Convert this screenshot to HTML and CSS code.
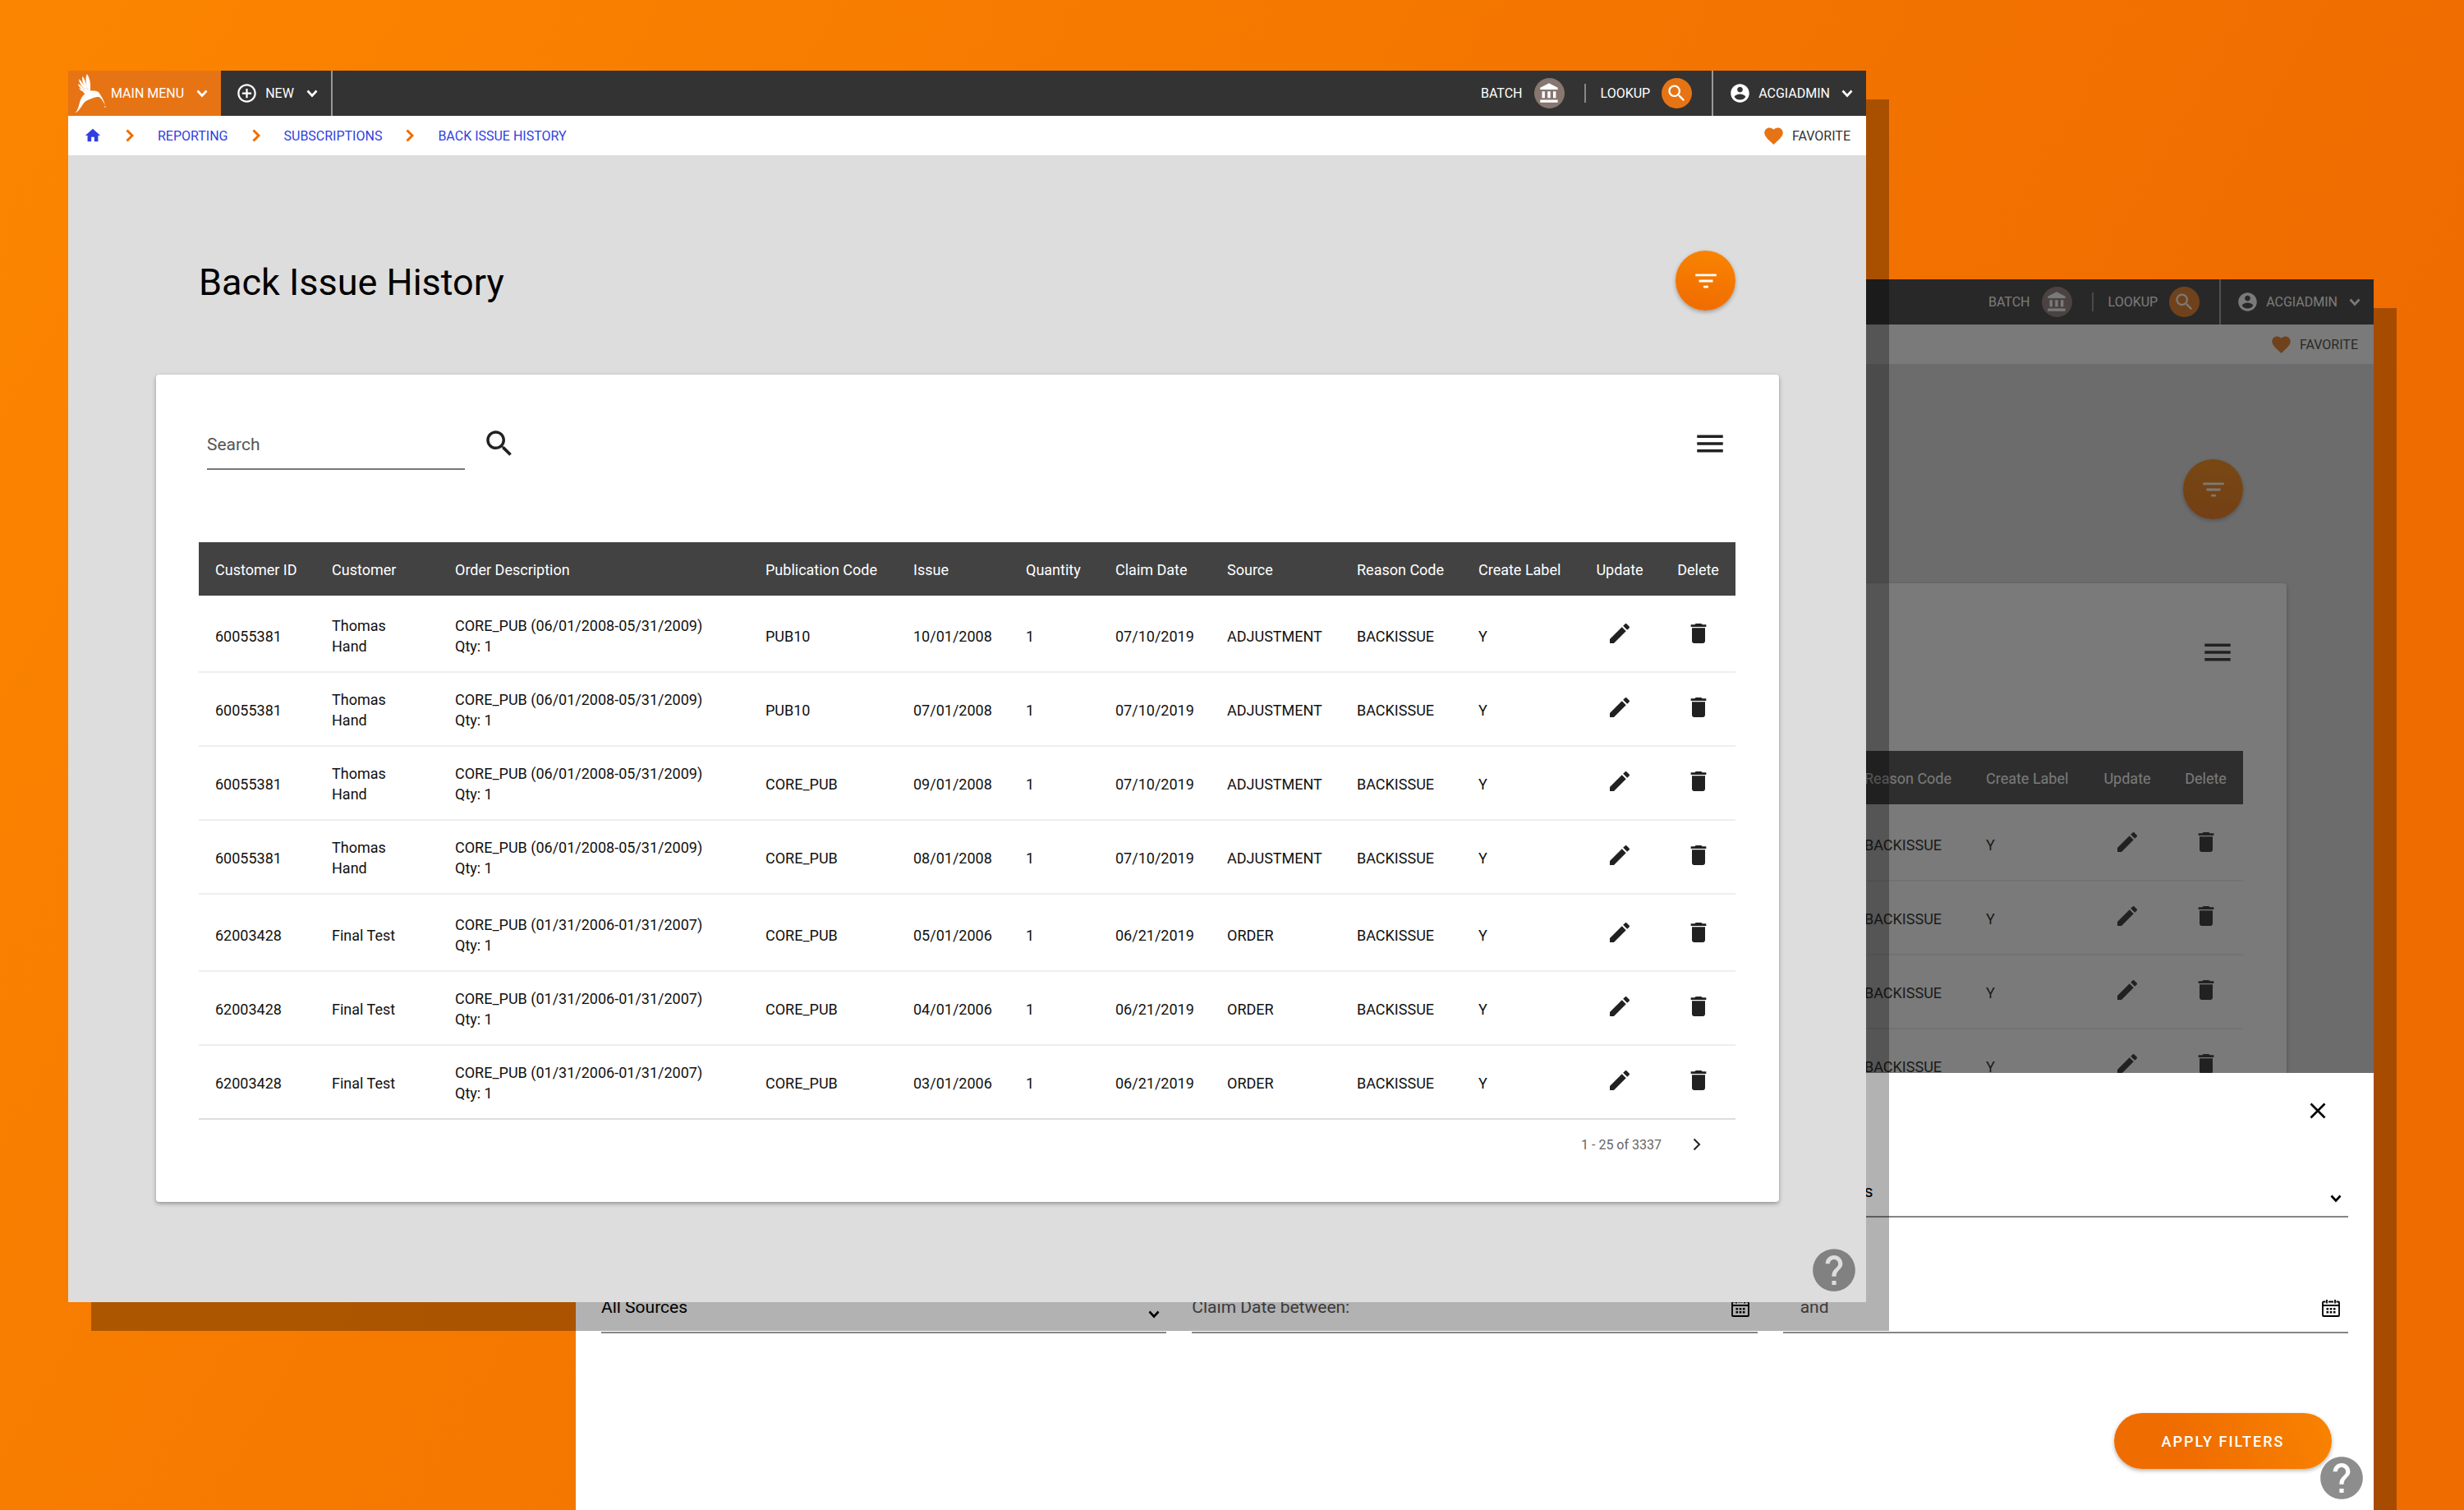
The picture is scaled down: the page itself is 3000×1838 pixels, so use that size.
FILE: index.html
```html
<!DOCTYPE html>
<html lang="en">
<head>
<meta charset="utf-8">
<title>Back Issue History</title>
<link rel="stylesheet" href="styles.css">
</head>
<body>
<svg class="sprite" aria-hidden="true">
  <symbol id="i-bird" viewBox="25 15 115 145">
    <path d="M79 76 C82 54 78 30 67 15 C60 30 63 52 70 70 Z M69 70 C64 50 60 36 51 23 C46 36 54 56 65 71 Z M65 72 C55 56 49 44 38 34 C36 46 48 62 61 72 Z M61 74 C51 64 45 56 34 51 C35 62 47 71 58 75 Z M58 77 C51 73 45 68 38 66 C41 76 50 80 58 80 Z"/>
    <path d="M54 76 C60 68 74 68 78 76 C88 77 98 76 106 80 C112 83 114 88 117 93 C124 104 131 116 134 131 C129 118 122 107 113 100 C104 99 96 101 88 104 C74 109 62 113 55 122 C47 133 40 149 25 158 C35 144 38 128 42 114 C46 102 52 94 60 88 C54 84 50 80 54 76 Z"/>
    <circle cx="134" cy="136" r="2.500"/>
  </symbol>
  <symbol id="i-down" viewBox="0 0 14 10"><path d="M1.500 1.500 L7 7.500 L12.500 1.500" fill="none" stroke="currentColor" stroke-width="2.600"/></symbol>
  <symbol id="i-right" viewBox="0 0 10 16"><path d="M1.500 1.500 L8 8 L1.500 14.500" fill="none" stroke="currentColor" stroke-width="3"/></symbol>
  <symbol id="i-next" viewBox="0 0 10 16"><path d="M1.500 1.500 L8 8 L1.500 14.500" fill="none" stroke="currentColor" stroke-width="2"/></symbol>
  <symbol id="i-plus" viewBox="0 0 24 24"><path d="M13 7h-2v4H7v2h4v4h2v-4h4v-2h-4V7zm-1-5C6.480 2 2 6.480 2 12s4.480 10 10 10 10-4.480 10-10S17.520 2 12 2zm0 18c-4.410 0-8-3.590-8-8s3.590-8 8-8 8 3.590 8 8-3.590 8-8 8z"/></symbol>
  <symbol id="i-bank" viewBox="0 0 24 24"><path d="M4 10v7h3v-7H4zm6 0v7h3v-7h-3zM2 22h19v-3H2v3zm14-12v7h3v-7h-3zm-4.500-9L2 6v2h19V6l-9.500-5z"/></symbol>
  <symbol id="i-search" viewBox="0 0 24 24"><path d="M15.500 14h-.79l-.28-.27C15.410 12.590 16 11.110 16 9.500 16 5.910 13.090 3 9.500 3S3 5.910 3 9.500 5.910 16 9.500 16c1.610 0 3.090-.59 4.230-1.570l.27.28v.79l5 4.990L20.490 19l-4.990-5zm-6 0C7.010 14 5 11.990 5 9.500S7.010 5 9.500 5 14 7.010 14 9.500 11.990 14 9.500 14z"/></symbol>
  <symbol id="i-user" viewBox="0 0 24 24"><path d="M12 2C6.480 2 2 6.480 2 12s4.480 10 10 10 10-4.480 10-10S17.520 2 12 2zm0 3c1.660 0 3 1.340 3 3s-1.340 3-3 3-3-1.340-3-3 1.340-3 3-3zm0 14.200c-2.500 0-4.710-1.280-6-3.220.03-1.990 4-3.080 6-3.080 1.990 0 5.970 1.090 6 3.080-1.290 1.940-3.500 3.220-6 3.220z"/></symbol>
  <symbol id="i-home" viewBox="0 0 24 24"><path d="M10 20v-6h4v6h5v-8h3L12 3 2 12h3v8z"/></symbol>
  <symbol id="i-heart" viewBox="0 0 24 24"><path d="M12 21.350l-1.450-1.320C5.400 15.360 2 12.280 2 8.500 2 5.420 4.420 3 7.500 3c1.740 0 3.410.81 4.500 2.090C13.090 3.810 14.760 3 16.500 3 19.580 3 22 5.420 22 8.500c0 3.780-3.400 6.860-8.550 11.540L12 21.350z"/></symbol>
  <symbol id="i-filter" viewBox="0 0 24 24"><path d="M10 18h4v-2h-4v2zM3 6v2h18V6H3zm3 7h12v-2H6v2z"/></symbol>
  <symbol id="i-menu" viewBox="0 0 24 24"><path d="M3 18h18v-2H3v2zm0-5h18v-2H3v2zm0-7v2h18V6H3z"/></symbol>
  <symbol id="i-edit" viewBox="0 0 24 24"><path d="M3 17.250V21h3.750L17.810 9.940l-3.750-3.750L3 17.250zM20.710 7.040c.39-.39.39-1.020 0-1.410l-2.340-2.340c-.39-.39-1.020-.39-1.410 0l-1.830 1.830 3.750 3.750 1.830-1.830z"/></symbol>
  <symbol id="i-trash" viewBox="0 0 24 24"><path d="M6 19c0 1.100.9 2 2 2h8c1.100 0 2-.9 2-2V7H6v12zM19 4h-3.500l-1-1h-5l-1 1H5v2h14V4z"/></symbol>
  <symbol id="i-help" viewBox="0 0 24 24"><path d="M12 2C6.480 2 2 6.480 2 12s4.480 10 10 10 10-4.480 10-10S17.520 2 12 2zm1 17h-2v-2h2v2zm2.070-7.750l-.9.920C13.450 12.900 13 13.500 13 15h-2v-.5c0-1.100.45-2.100 1.170-2.830l1.240-1.260c.37-.36.59-.86.59-1.410 0-1.100-.9-2-2-2s-2 .9-2 2H8c0-2.210 1.790-4 4-4s4 1.790 4 4c0 .88-.36 1.680-.93 2.250z"/></symbol>
  <symbol id="i-close" viewBox="0 0 20 20"><path d="M1.500 1.500 L18.500 18.500 M18.500 1.500 L1.500 18.500" fill="none" stroke="currentColor" stroke-width="2.600"/></symbol>
  <symbol id="i-calendar" viewBox="0 0 22 21"><path d="M4.500 2.500H2a1 1 0 0 0-1 1V19a1 1 0 0 0 1 1h18a1 1 0 0 0 1-1V3.500a1 1 0 0 0-1-1h-2.500M8 2.500h6M1 7h20M6 0v4.500M16 0v4.500" fill="none" stroke="currentColor" stroke-width="1.800"/><path d="M5.500 10h2.600v2.600H5.500zM9.700 10h2.600v2.600H9.700zM13.900 10h2.600v2.600h-2.600zM5.500 14h2.600v2.600H5.500zM9.700 14h2.600v2.600H9.700zM13.900 14h2.600v2.600h-2.600z"/></symbol>
</svg>

<div class="desktop">

  <section class="window window-back">
    <header class="topbar">
      <div class="topbar-right">
        <button class="tool">BATCH <span class="disc disc-grey"><svg class="s27"><use href="#i-bank"/></svg></span></button>
        <span class="bar"></span>
        <button class="tool tool-lookup">LOOKUP <span class="disc"><svg class="s27"><use href="#i-search"/></svg></span></button>
        <button class="account"><svg class="s27"><use href="#i-user"/></svg><span class="account-name">ACGIADMIN</span><svg class="down"><use href="#i-down"/></svg></button>
      </div>
    </header>
    <div class="crumbs">
      <button class="favorite"><svg class="s27"><use href="#i-heart"/></svg>FAVORITE</button>
    </div>
    <div class="page">
      <div class="page-head">
        <button class="fab" aria-label="Filter"><svg class="s34"><use href="#i-filter"/></svg></button>
      </div>
      <div class="card">
        <div class="toolbar">
          <button class="icon-btn toolbar-menu" aria-label="Menu"><svg class="s42"><use href="#i-menu"/></svg></button>
        </div>
        <table class="grid grid-tail">
          <colgroup><col class="c-reason"><col class="c-label"><col class="c-update"><col class="c-delete"></colgroup>
          <thead><tr><th>Reason Code</th><th>Create Label</th><th class="act">Update</th><th class="act">Delete</th></tr></thead>
          <tbody>
            <tr class="group"><td>BACKISSUE</td><td>Y</td><td class="act"><button class="icon-btn" aria-label="Update"><svg class="s32"><use href="#i-edit"/></svg></button></td><td class="act"><button class="icon-btn" aria-label="Delete"><svg class="s32"><use href="#i-trash"/></svg></button></td></tr>
            <tr><td>BACKISSUE</td><td>Y</td><td class="act"><button class="icon-btn" aria-label="Update"><svg class="s32"><use href="#i-edit"/></svg></button></td><td class="act"><button class="icon-btn" aria-label="Delete"><svg class="s32"><use href="#i-trash"/></svg></button></td></tr>
            <tr><td>BACKISSUE</td><td>Y</td><td class="act"><button class="icon-btn" aria-label="Update"><svg class="s32"><use href="#i-edit"/></svg></button></td><td class="act"><button class="icon-btn" aria-label="Delete"><svg class="s32"><use href="#i-trash"/></svg></button></td></tr>
            <tr><td>BACKISSUE</td><td>Y</td><td class="act"><button class="icon-btn" aria-label="Update"><svg class="s32"><use href="#i-edit"/></svg></button></td><td class="act"><button class="icon-btn" aria-label="Delete"><svg class="s32"><use href="#i-trash"/></svg></button></td></tr>
          </tbody>
        </table>
      </div>
    </div>
    <form class="sheet">
      <button type="button" class="icon-btn close" aria-label="Close"><svg class="s20"><use href="#i-close"/></svg></button>
      <div class="fields">
        <div class="field field-reason"><select aria-label="Reason"><option>All Reasons</option></select><svg class="down field-icon"><use href="#i-down"/></svg></div>
        <div class="field"><select aria-label="Source"><option>All Sources</option></select><svg class="down field-icon"><use href="#i-down"/></svg></div>
        <div class="field"><input type="text" aria-label="Claim date from" placeholder="Claim Date between:"><svg class="cal"><use href="#i-calendar"/></svg></div>
        <div class="field field-and"><input type="text" aria-label="Claim date to" placeholder="and"><svg class="cal"><use href="#i-calendar"/></svg></div>
      </div>
      <button type="button" class="apply">APPLY FILTERS</button>
    </form>
    <button class="help" aria-label="Help"><svg class="s62"><use href="#i-help"/></svg></button>
  </section>

  <section class="window window-front">
    <header class="topbar">
      <button class="main-menu"><svg class="bird"><use href="#i-bird"/></svg><span class="main-menu-text">MAIN MENU</span><svg class="down"><use href="#i-down"/></svg></button>
      <button class="new-menu"><svg class="s27"><use href="#i-plus"/></svg><span class="new-menu-text">NEW</span><svg class="down"><use href="#i-down"/></svg></button>
      <div class="topbar-right">
        <button class="tool">BATCH <span class="disc disc-grey"><svg class="s27"><use href="#i-bank"/></svg></span></button>
        <span class="bar"></span>
        <button class="tool tool-lookup">LOOKUP <span class="disc"><svg class="s27"><use href="#i-search"/></svg></span></button>
        <button class="account"><svg class="s27"><use href="#i-user"/></svg><span class="account-name">ACGIADMIN</span><svg class="down"><use href="#i-down"/></svg></button>
      </div>
    </header>
    <nav class="crumbs" aria-label="Breadcrumb">
      <a class="home" href="#" aria-label="Home"><svg class="s22"><use href="#i-home"/></svg></a>
      <svg class="sep"><use href="#i-right"/></svg>
      <a href="#">REPORTING</a>
      <svg class="sep"><use href="#i-right"/></svg>
      <a href="#">SUBSCRIPTIONS</a>
      <svg class="sep"><use href="#i-right"/></svg>
      <a href="#">BACK ISSUE HISTORY</a>
      <button class="favorite"><svg class="s27"><use href="#i-heart"/></svg>FAVORITE</button>
    </nav>
    <main class="page">
      <div class="page-head">
        <h1>Back Issue History</h1>
        <button class="fab" aria-label="Filter"><svg class="s34"><use href="#i-filter"/></svg></button>
      </div>
      <div class="card">
        <div class="toolbar">
          <input class="search" type="text" placeholder="Search" aria-label="Search">
          <button class="icon-btn" aria-label="Run search"><svg class="s42"><use href="#i-search"/></svg></button>
          <button class="icon-btn toolbar-menu" aria-label="Menu"><svg class="s42"><use href="#i-menu"/></svg></button>
        </div>
        <table class="grid">
          <colgroup><col class="c-id"><col class="c-customer"><col class="c-order"><col class="c-pub"><col class="c-issue"><col class="c-qty"><col class="c-claim"><col class="c-source"><col class="c-reason"><col class="c-label"><col class="c-update"><col class="c-delete"></colgroup>
          <thead><tr><th>Customer ID</th><th>Customer</th><th>Order Description</th><th>Publication Code</th><th>Issue</th><th>Quantity</th><th>Claim Date</th><th>Source</th><th>Reason Code</th><th>Create Label</th><th class="act">Update</th><th class="act">Delete</th></tr></thead>
          <tbody>
            <tr class="group"><td>60055381</td><td>Thomas<br>Hand</td><td>CORE_PUB (06/01/2008-05/31/2009)<br>Qty: 1</td><td>PUB10</td><td>10/01/2008</td><td>1</td><td>07/10/2019</td><td>ADJUSTMENT</td><td>BACKISSUE</td><td>Y</td><td class="act"><button class="icon-btn" aria-label="Update"><svg class="s32"><use href="#i-edit"/></svg></button></td><td class="act"><button class="icon-btn" aria-label="Delete"><svg class="s32"><use href="#i-trash"/></svg></button></td></tr>
            <tr><td>60055381</td><td>Thomas<br>Hand</td><td>CORE_PUB (06/01/2008-05/31/2009)<br>Qty: 1</td><td>PUB10</td><td>07/01/2008</td><td>1</td><td>07/10/2019</td><td>ADJUSTMENT</td><td>BACKISSUE</td><td>Y</td><td class="act"><button class="icon-btn" aria-label="Update"><svg class="s32"><use href="#i-edit"/></svg></button></td><td class="act"><button class="icon-btn" aria-label="Delete"><svg class="s32"><use href="#i-trash"/></svg></button></td></tr>
            <tr><td>60055381</td><td>Thomas<br>Hand</td><td>CORE_PUB (06/01/2008-05/31/2009)<br>Qty: 1</td><td>CORE_PUB</td><td>09/01/2008</td><td>1</td><td>07/10/2019</td><td>ADJUSTMENT</td><td>BACKISSUE</td><td>Y</td><td class="act"><button class="icon-btn" aria-label="Update"><svg class="s32"><use href="#i-edit"/></svg></button></td><td class="act"><button class="icon-btn" aria-label="Delete"><svg class="s32"><use href="#i-trash"/></svg></button></td></tr>
            <tr><td>60055381</td><td>Thomas<br>Hand</td><td>CORE_PUB (06/01/2008-05/31/2009)<br>Qty: 1</td><td>CORE_PUB</td><td>08/01/2008</td><td>1</td><td>07/10/2019</td><td>ADJUSTMENT</td><td>BACKISSUE</td><td>Y</td><td class="act"><button class="icon-btn" aria-label="Update"><svg class="s32"><use href="#i-edit"/></svg></button></td><td class="act"><button class="icon-btn" aria-label="Delete"><svg class="s32"><use href="#i-trash"/></svg></button></td></tr>
            <tr class="group"><td>62003428</td><td>Final Test</td><td>CORE_PUB (01/31/2006-01/31/2007)<br>Qty: 1</td><td>CORE_PUB</td><td>05/01/2006</td><td>1</td><td>06/21/2019</td><td>ORDER</td><td>BACKISSUE</td><td>Y</td><td class="act"><button class="icon-btn" aria-label="Update"><svg class="s32"><use href="#i-edit"/></svg></button></td><td class="act"><button class="icon-btn" aria-label="Delete"><svg class="s32"><use href="#i-trash"/></svg></button></td></tr>
            <tr><td>62003428</td><td>Final Test</td><td>CORE_PUB (01/31/2006-01/31/2007)<br>Qty: 1</td><td>CORE_PUB</td><td>04/01/2006</td><td>1</td><td>06/21/2019</td><td>ORDER</td><td>BACKISSUE</td><td>Y</td><td class="act"><button class="icon-btn" aria-label="Update"><svg class="s32"><use href="#i-edit"/></svg></button></td><td class="act"><button class="icon-btn" aria-label="Delete"><svg class="s32"><use href="#i-trash"/></svg></button></td></tr>
            <tr><td>62003428</td><td>Final Test</td><td>CORE_PUB (01/31/2006-01/31/2007)<br>Qty: 1</td><td>CORE_PUB</td><td>03/01/2006</td><td>1</td><td>06/21/2019</td><td>ORDER</td><td>BACKISSUE</td><td>Y</td><td class="act"><button class="icon-btn" aria-label="Update"><svg class="s32"><use href="#i-edit"/></svg></button></td><td class="act"><button class="icon-btn" aria-label="Delete"><svg class="s32"><use href="#i-trash"/></svg></button></td></tr>
          </tbody>
        </table>
        <div class="pager"><span>1 - 25 of 3337</span><button class="icon-btn" aria-label="Next page"><svg class="next"><use href="#i-next"/></svg></button></div>
      </div>
    </main>
    <button class="help" aria-label="Help"><svg class="s62"><use href="#i-help"/></svg></button>
  </section>

</div>
</body>
</html>
```
FILE: styles.css
```css
* { box-sizing: border-box; }

body {
  margin: 0;
  font-family: Roboto, "Liberation Sans", sans-serif;
  font-size: 18px;
  line-height: 25px;
  color: #111;
}

button {
  margin: 0;
  padding: 0;
  border: 0;
  background: none;
  color: inherit;
  font: inherit;
  cursor: pointer;
}

input, select {
  margin: 0;
  border: 0;
  background: none;
  font: inherit;
  outline: 0;
}

svg { display: block; flex: none; fill: currentColor; }
.sprite { position: absolute; width: 0; height: 0; }
.s20 { width: 20px; height: 20px; }
.s22 { width: 22px; height: 22px; }
.s27 { width: 27px; height: 27px; }
.s32 { width: 32px; height: 32px; }
.s34 { width: 34px; height: 34px; }
.s42 { width: 42px; height: 42px; }
.s62 { width: 62px; height: 62px; }
.down { width: 14px; height: 10px; }
.next { width: 10px; height: 16px; }

/* Desktop: both windows share one grid cell and overlap */
.desktop {
  display: grid;
  min-height: 100vh;
  background: linear-gradient(120deg, #fb8500, #ef6c00 78%);
}

.window {
  grid-area: 1 / 1;
  position: relative;
  isolation: isolate;
  background: #ddd;
  box-shadow: 28px 35px 0 rgba(0, 0, 0, .3);
}
.window-front { margin: 86px 728px 253px 83px; }
.window-back { margin: 340px 110px 0 701px; }
.window-back::before {
  content: "";
  position: absolute;
  inset: 0;
  z-index: 1;
  background: rgba(33, 33, 33, .6);
}

/* Top bar */
.topbar {
  display: flex;
  height: 55px;
  background: #333;
  color: #fff;
  font-size: 16px;
}
.topbar button { display: flex; align-items: center; }
.main-menu { padding: 0 16px 0 9px; background: #e77414; }
.bird { width: 38px; height: 48px; }
.main-menu-text { margin: 0 15px 0 5px; }
.new-menu { padding: 0 16px 0 18px; border-right: 2px solid #999; }
.new-menu-text { margin: 0 15px 0 9px; }
.topbar-right { display: flex; margin-left: auto; align-items: stretch; }
.tool { gap: 14px; }
.tool-lookup { margin-right: 24px; }
.disc {
  display: grid;
  place-items: center;
  width: 37px;
  height: 37px;
  border-radius: 50%;
  background: #e77414;
}
.disc-grey { background: #877770; }
.bar { align-self: center; width: 2px; height: 23px; margin: 0 18px 0 24px; background: #888; }
.account { padding: 0 16px 0 19px; border-left: 2px solid #999; }
.account-name { margin: 0 14px 0 9px; }

/* Breadcrumb strip */
.crumbs {
  display: flex;
  align-items: center;
  gap: 29px;
  height: 48px;
  padding: 0 19px;
  background: #fff;
  font-size: 16px;
}
.crumbs a { color: #2f3fe0; text-decoration: none; }
.sep { width: 10px; height: 16px; color: #ee6c00; }
.favorite { display: flex; align-items: center; gap: 9px; margin-left: auto; color: #333; }
.favorite svg { color: #e77414; }

/* Page body */
.page { padding: 116px 106px 122px 107px; }
.page-head {
  display: flex;
  align-items: center;
  height: 73px;
  margin-bottom: 78px;
  padding: 0 53px 0 52px;
}
h1 { margin: 0; padding-top: 4px; font-size: 45px; line-height: 53px; font-weight: 400; color: #000; }
.fab {
  display: grid;
  place-items: center;
  width: 73px;
  height: 73px;
  margin-left: auto;
  border-radius: 50%;
  background: linear-gradient(190deg, #fa8500, #ef6a00);
  box-shadow: 0 2px 5px rgba(0, 0, 0, .3);
  color: #fff;
}
.card {
  padding: 56px 53px 40px 52px;
  border-radius: 4px;
  background: #fff;
  box-shadow: 0 2px 5px rgba(0, 0, 0, .35);
}
.toolbar { display: flex; gap: 21px; height: 60px; margin-bottom: 88px; padding: 0 10px; color: #212121; }
.toolbar .icon-btn { height: 56px; }
.toolbar-menu { margin-left: auto; }
.search { width: 314px; height: 60px; padding: 0; border-bottom: 2px solid #777; font-size: 21px; }
::placeholder { color: #555; opacity: 1; }
.icon-btn { display: inline-grid; place-items: center; }

/* Results table */
.grid { width: 100%; table-layout: fixed; border-spacing: 0; }
.grid-tail { width: 481px; margin-left: auto; }
.c-id { width: 142px; }
.c-customer { width: 150px; }
.c-order { width: 378px; }
.c-pub { width: 180px; }
.c-issue { width: 137px; }
.c-qty { width: 109px; }
.c-claim { width: 136px; }
.c-source { width: 158px; }
.c-reason { width: 148px; }
.c-label { width: 142px; }
.c-update { width: 100px; }
.c-delete { width: 91px; }
.grid th {
  height: 65px;
  padding: 2px 0 0 20px;
  background: #424242;
  color: #fff;
  font-weight: 400;
  text-align: left;
  white-space: nowrap;
}
.grid td { height: 90px; padding: 2px 0 0 20px; border-bottom: 2px solid #eee; white-space: nowrap; }
.grid .group td { height: 94px; padding-top: 6px; }
.grid tbody tr:last-child td { border-color: #ddd; }
.grid .act { padding-left: 0; padding-right: 0; text-align: center; }
.grid .icon-btn { padding-bottom: 6px; vertical-align: middle; color: #212121; }

.pager {
  display: flex;
  align-items: center;
  justify-content: flex-end;
  gap: 38px;
  height: 60px;
  padding-right: 42px;
  font-size: 16px;
  color: #666;
}
.pager .icon-btn { color: #222; }

.help { position: absolute; right: 8px; bottom: 8px; z-index: 3; color: rgba(80, 80, 80, .65); }

/* Filter sheet of the back window */
.sheet {
  position: absolute;
  right: 0;
  bottom: 0;
  left: 0;
  z-index: 2;
  display: flex;
  flex-direction: column;
  align-items: flex-end;
  padding: 36px 31px 50px;
  background: #fff;
  color: #000;
}
.close { margin-right: 27px; }
.fields {
  display: grid;
  grid-template-columns: repeat(3, 1fr);
  gap: 81px 31px;
  width: 100%;
  margin: 60px 0 97px;
}
.field { position: relative; display: flex; align-items: center; height: 60px; padding-right: 10px; border-bottom: 2px solid #858585; }
.field-reason { grid-column: 3; }
.field-and { padding-left: 21px; }
.field input, .field select { flex: 1; min-width: 0; height: 56px; padding: 0 0 2px; font-size: 21px; color: #000; appearance: none; }
.field-icon { position: absolute; right: 8px; bottom: 16px; pointer-events: none; }
.cal { width: 22px; height: 21px; }
.apply {
  width: 265px;
  height: 68px;
  margin-right: 20px;
  border-radius: 34px;
  background: linear-gradient(70deg, #ef6c00 30%, #f98300);
  box-shadow: 0 2px 5px rgba(0, 0, 0, .3);
  color: #fff;
  font-weight: 500;
  letter-spacing: 2px;
}
```
